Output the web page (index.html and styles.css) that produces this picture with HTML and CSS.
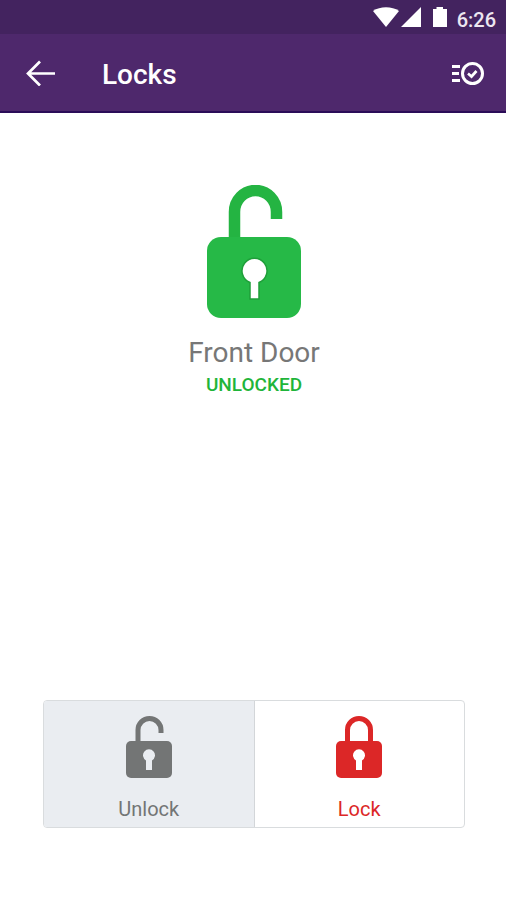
FILE: index.html
```html
<!DOCTYPE html>
<html lang="en">
<head>
  <meta charset="UTF-8" />
  <meta name="viewport" content="width=device-width, initial-scale=1.0" />
  <title>Locks</title>
  <link rel="stylesheet" href="styles.css">
</head>
<body>
  <div class="status-bar">
    <svg width="76" height="22" viewBox="0 0 76 22" fill="#fff" aria-hidden="true">
      <path d="M0 5C7 0 19 0 26 5L13 21z" />
      <path d="M28 21L48 1V21z" />
      <path d="M60 3h3.500V1h6.500v2h4v18H60z" />
    </svg>
    <span class="clock">6:26</span>
  </div>
  <header class="app-bar">
    <button class="icon-button" type="button" aria-label="Back">
      <svg width="30" height="26" viewBox="0 0 30 26" fill="none" stroke="#fff" stroke-width="2.700">
        <path d="M29 13.500H2M14 1.500L2 13.500L14 25.500" />
      </svg>
    </button>
    <h1>Locks</h1>
    <button class="icon-button" type="button" aria-label="Lock history">
      <svg width="32" height="26" viewBox="0 0 32 26" fill="none" stroke="#fff" stroke-width="3">
        <path d="M0 6.500h8M0 13.500h7M0 20.500h8" />
        <circle cx="20.500" cy="13.500" r="10" />
        <path d="M16 13.500l3.500 3L24.500 11" stroke-width="2.700" />
      </svg>
    </button>
  </header>

  <main>
    <section class="lock-status">
      <svg width="94" height="133" viewBox="0 0 94 133" aria-hidden="true">
        <path d="M27.500 56V27a21 21.500 0 0 1 42 0V34" fill="none" stroke="#24b442" stroke-width="11.500" />
        <rect y="52" width="94" height="81" rx="14" fill="#26b947" />
        <path d="M43 97.500A12.500 12.500 0 1 1 52 97.500V114H43z" fill="#fff" stroke="#1f9f3a" stroke-width="1.500" />
      </svg>
      <h2>Front Door</h2>
      <p>UNLOCKED</p>
    </section>

    <div class="lock-actions">
      <button class="action selected" type="button">
        <svg width="46" height="62" viewBox="0 0 46 62" aria-hidden="true">
          <path d="M12 28V14a11.500 11.500 0 0 1 23 0V17" fill="none" stroke="currentColor" stroke-width="5" />
          <rect y="25" width="46" height="37" rx="5" fill="currentColor" />
          <path d="M20 44.500A6 6 0 1 1 26 44.500V54H20z" fill="#eaedf1" />
        </svg>
        <span>Unlock</span>
      </button>
      <button class="action danger" type="button">
        <svg width="46" height="62" viewBox="0 0 46 62" aria-hidden="true">
          <path d="M11.500 28V14a11.500 11.500 0 0 1 23 0V28" fill="none" stroke="currentColor" stroke-width="5" />
          <rect y="25" width="46" height="37" rx="5" fill="currentColor" />
          <path d="M20 44.500A6 6 0 1 1 26 44.500V54H20z" fill="#fff" />
        </svg>
        <span>Lock</span>
      </button>
    </div>
  </main>
</body>
</html>
```

FILE: styles.css
```css
* {
  box-sizing: border-box;
}
body {
  margin: 0;
  min-height: 100vh;
  display: flex;
  flex-direction: column;
  font-family: Roboto, sans-serif;
  background: #fff;
}
button {
  border: none;
  padding: 0;
  background: none;
  font-family: inherit;
  cursor: pointer;
}
svg {
  display: block;
}
.status-bar {
  display: flex;
  justify-content: flex-end;
  align-items: center;
  gap: 8px;
  height: 34px;
  padding: 0 10px;
  background: #43235f;
}
.clock {
  color: #ece6f0;
  font-size: 20px;
  font-weight: 500;
  line-height: 24px;
  padding-top: 6px;
}
.app-bar {
  display: flex;
  align-items: center;
  height: 79px;
  padding: 0 22px 0 26px;
  background: #4e286c;
  border-bottom: 2px solid #2b0c58;
}
.app-bar h1 {
  flex: 1;
  margin: 0 0 0 46px;
  padding-top: 4px;
  color: #fff;
  font-size: 28px;
  font-weight: 500;
  line-height: 32px;
}
main {
  flex: 1;
  display: flex;
  flex-direction: column;
  justify-content: space-between;
  padding: 72px 41px 72px 43px;
}
.lock-status {
  display: flex;
  flex-direction: column;
  align-items: center;
}
.lock-status h2 {
  margin: 19px 0 0;
  color: #777;
  font-size: 28px;
  font-weight: 400;
  line-height: 32px;
}
.lock-status p {
  margin: 4px 0 0;
  color: #1fb53a;
  font-size: 19px;
  font-weight: 500;
  line-height: 24px;
}
.lock-actions {
  display: flex;
  border: 1px solid #d9dcde;
  border-radius: 4px;
  overflow: hidden;
}
.action {
  flex: 1;
  display: flex;
  flex-direction: column;
  align-items: center;
  gap: 19px;
  padding: 15px 0 6px;
  font-size: 20px;
  line-height: 24px;
}
.selected {
  color: #737575;
  background: #eaedf1;
  border-right: 1px solid #d3d6d9;
}
.danger {
  color: #dc2727;
}
```
